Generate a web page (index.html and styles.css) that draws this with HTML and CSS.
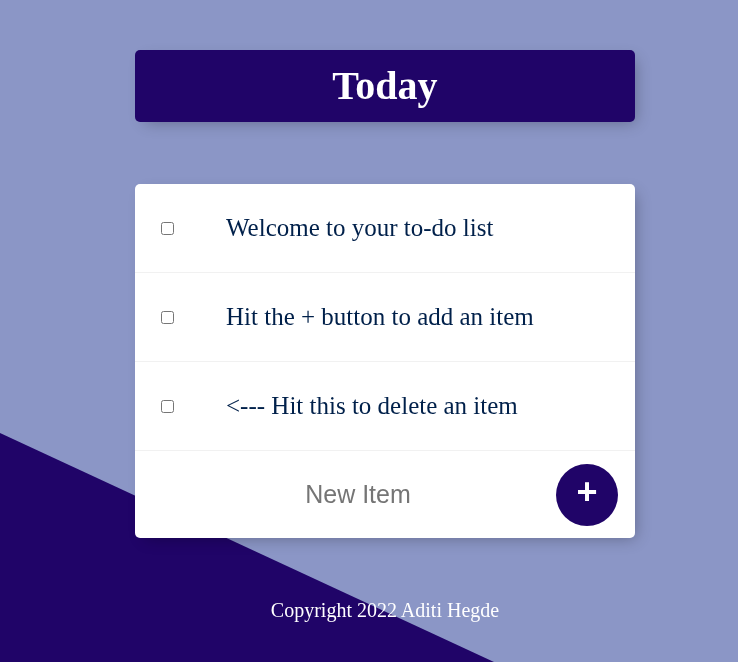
FILE: index.html
```html
<!DOCTYPE html>
<html lang="en">
<head>
<meta charset="utf-8">
<title>To-Do List</title>
<link rel="stylesheet" href="styles.css">
</head>
<body>
<div class="page">
  <div class="heading">
    <h1>Today</h1>
  </div>
  <div class="box">
    <div class="item">
      <input type="checkbox">
      <p>Welcome to your to-do list</p>
    </div>
    <div class="item">
      <input type="checkbox">
      <p>Hit the + button to add an item</p>
    </div>
    <div class="item">
      <input type="checkbox">
      <p>&lt;--- Hit this to delete an item</p>
    </div>
    <form class="new-item" onsubmit="return false">
      <input type="text" name="newItem" placeholder="New Item" autocomplete="off">
      <button type="submit" class="add">+</button>
    </form>
  </div>
  <footer class="footer">Copyright 2022 Aditi Hegde</footer>
</div>
</body>
</html>
```
FILE: styles.css
```css
html {
  background-color: #8b96c6;
}
body {
  margin: 0;
  min-height: 662px;
  font-family: "Liberation Serif", "Times New Roman", serif;
}
body::before {
  content: "";
  position: fixed;
  inset: 0;
  z-index: -1;
  background-color: #200468;
  clip-path: polygon(0 433px, 494px 662px, 0 662px);
}
.page {
  width: 500px;
  margin-left: 135px;
  padding-top: 50px;
}
.heading {
  height: 72px;
  background-color: #200468;
  border-radius: 5px;
  box-shadow: 5px 5px 15px -5px rgba(0, 0, 0, 0.3);
  text-align: center;
}
.heading h1 {
  margin: 0;
  font-size: 40px;
  line-height: 72px;
  font-weight: bold;
  color: #fff;
}
.box {
  margin-top: 62px;
  background: #fff;
  border-radius: 5px;
  box-shadow: 5px 5px 15px -5px rgba(0, 0, 0, 0.3);
}
.item {
  height: 88px;
  display: flex;
  align-items: center;
  border-bottom: 1px solid #f1f1f1;
}
.item input[type="checkbox"] {
  margin: 0 0 0 26px;
  width: 13px;
  height: 13px;
}
.item p {
  margin: 0;
  padding-left: 52px;
  font-size: 25px;
  color: #00204a;
}
.new-item {
  height: 87px;
  display: flex;
  align-items: center;
  padding-left: 25px;
}
.new-item input[type="text"] {
  width: 396px;
  height: 60px;
  padding: 0;
  border: none;
  outline: none;
  background: transparent;
  text-align: center;
  font-family: "Liberation Sans", Arial, sans-serif;
  font-size: 25px;
  color: #333;
}
.new-item input[type="text"]::placeholder {
  color: #757575;
}
.add {
  width: 62px;
  height: 62px;
  border-radius: 50%;
  border: 0;
  padding: 0 0 6px;
  background-color: #200468;
  color: #fff;
  font-family: "Liberation Sans", Arial, sans-serif;
  font-size: 36px;
  font-weight: bold;
  line-height: 1;
  cursor: pointer;
}
.footer {
  padding-top: 61px;
  text-align: center;
  color: #fff;
  font-size: 20px;
  line-height: 23px;
}
```
